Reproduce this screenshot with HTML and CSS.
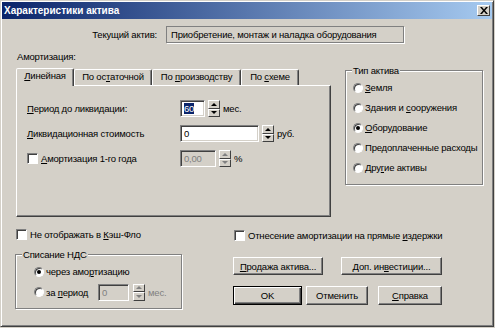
FILE: index.html
```html
<!DOCTYPE html>
<html lang="ru">
<head>
    <meta charset="UTF-8">
    <meta name="viewport" content="width=device-width, initial-scale=1.0">
    <title>Характеристики актива</title>
    <link rel="stylesheet" href="styles.css">
</head>
<body>

<div class="window">
    <div class="titlebar">
        <span class="title">Характеристики актива</span>
        <span class="close-btn">
            <svg width="8" height="7" viewBox="0 0 8 7"><path d="M0 0h2l2 2.5L6 0h2L5 3.5 8 7H6L4 4.5 2 7H0l3-3.5z" fill="#000"/></svg>
        </span>
    </div>

    <div class="content">
        <div class="current-row">
            <span class="current-label">Текущий актив:</span>
            <div class="readonly-field">Приобретение, монтаж и наладка оборудования</div>
        </div>

        <div class="main">
            <div class="amort">
                <div class="caption">Амортизация:</div>
                <div class="tabs">
                    <div class="tab tab-line active"><u>Л</u>инейная</div>
                    <div class="tab tab-rest">По ос<u>т</u>аточной</div>
                    <div class="tab tab-prod">По <u>п</u>роизводству</div>
                    <div class="tab tab-scheme">По <u>с</u>хеме</div>
                </div>
                <div class="panel">
                    <div class="form-row">
                        <span class="row-label"><u>П</u>ериод до ликвидации:</span>
                        <div class="input w-period"><span class="selected">60</span></div>
                        <div class="spin"><span class="spin-up"></span><span class="spin-down"></span></div>
                        <span class="unit">мес.</span>
                    </div>
                    <div class="form-row">
                        <span class="row-label"><u>Л</u>иквидационная стоимость</span>
                        <div class="input w-residual">0</div>
                        <div class="spin"><span class="spin-up"></span><span class="spin-down"></span></div>
                        <span class="unit">руб.</span>
                    </div>
                    <div class="form-row">
                        <span class="row-label check-label"><span class="checkbox"></span><span><u>А</u>мортизация 1-го года</span></span>
                        <div class="input w-first disabled">0,00</div>
                        <div class="spin disabled"><span class="spin-up"></span><span class="spin-down"></span></div>
                        <span class="unit">%</span>
                    </div>
                </div>
            </div>

            <fieldset class="group type-group">
                <legend>Тип актива</legend>
                <div class="radio-row"><span class="radio"></span><span><u>З</u>емля</span></div>
                <div class="radio-row"><span class="radio"></span><span>Здания и <u>с</u>ооружения</span></div>
                <div class="radio-row"><span class="radio checked"></span><span><u>О</u>борудование</span></div>
                <div class="radio-row"><span class="radio"></span><span>Пре<u>д</u>оплаченные расходы</span></div>
                <div class="radio-row"><span class="radio"></span><span>Дру<u>г</u>ие активы</span></div>
            </fieldset>
        </div>

        <div class="bottom">
            <div class="bottom-left">
                <div class="check-row"><span class="checkbox"></span><span>Не отображать в <u>К</u>эш-Фло</span></div>
                <fieldset class="group nds-group">
                    <legend>Списание НДС</legend>
                    <div class="radio-row"><span class="radio checked"></span><span>через амо<u>р</u>тизацию</span></div>
                    <div class="radio-row period-row">
                        <span class="radio"></span><span class="period-label">за <u>п</u>ериод</span>
                        <div class="input w-nds disabled">0</div>
                        <div class="spin disabled"><span class="spin-up"></span><span class="spin-down"></span></div>
                        <span class="unit muted">мес.</span>
                    </div>
                </fieldset>
            </div>

            <div class="bottom-right">
                <div class="check-row"><span class="checkbox"></span><span>Отнесение амортизации на прямые <u>и</u>здержки</span></div>
                <div class="button-row first">
                    <button class="btn w-sale"><u>П</u>родажа актива...</button>
                    <button class="btn w-invest">Доп. ин<u>в</u>естиции...</button>
                </div>
                <div class="button-row second">
                    <button class="btn default w-ok">OK</button>
                    <button class="btn w-cancel">Отменить</button>
                    <button class="btn w-help"><u>С</u>правка</button>
                </div>
            </div>
        </div>
    </div>
</div>

</body>
</html>
```

FILE: styles.css
```css
body {
    margin: 0;
    padding: 0;
    background-color: #d4d0c8;
    font-family: 'Liberation Sans', Arial, sans-serif;
    font-size: 9.5px;
    letter-spacing: -0.2px;
    color: #000;
}

u {
    text-decoration: underline;
    text-underline-offset: 1px;
}

.window {
    width: 494px;
    height: 327px;
    box-sizing: border-box;
    background: #d4d0c8;
    border: 1px solid;
    border-color: #d4d0c8 #404040 #404040 #d4d0c8;
    box-shadow: inset 1px 1px 0 #fff, inset -1px -1px 0 #808080;
    padding: 1px;
}

.titlebar {
    height: 17px;
    display: flex;
    align-items: center;
    justify-content: space-between;
    padding: 0 2px 0 2px;
    background: linear-gradient(to right, #0a246a, #a6caf0);
    color: #fff;
    font-weight: bold;
    font-size: 10px;
    letter-spacing: 0;
}

.close-btn {
    width: 13px;
    height: 11px;
    box-sizing: border-box;
    background: #d4d0c8;
    border: 1px solid;
    border-color: #fff #404040 #404040 #fff;
    display: flex;
    align-items: center;
    justify-content: center;
}

.content {
    padding: 7px 0 0 13px;
}

.current-row {
    display: flex;
    align-items: center;
    height: 17px;
}

.current-label {
    width: 142px;
    margin-right: 9px;
    text-align: right;
}

.readonly-field {
    width: 238px;
    height: 17px;
    box-sizing: border-box;
    border: 1px solid #808080;
    box-shadow: 1px 1px 0 #fff;
    padding-left: 4px;
    line-height: 15px;
}

.main {
    display: flex;
    margin-top: 7px;
}

.amort {
    width: 315px;
    margin-left: 1px;
}

.caption {
    height: 13px;
    line-height: 13px;
    padding-left: 1px;
}

.tabs {
    display: flex;
    align-items: flex-end;
    height: 18px;
    margin-top: 4px;
}

.tab {
    height: 16px;
    box-sizing: border-box;
    border: 1px solid;
    border-bottom: none;
    border-color: #fff #404040 transparent #fff;
    box-shadow: inset -1px 0 0 #808080;
    border-radius: 2px 2px 0 0;
    line-height: 14px;
    text-align: center;
    background: #d4d0c8;
}

.tab.active {
    height: 18px;
    margin-bottom: -1px;
    position: relative;
    z-index: 1;
}

.tab-line { width: 58px; }
.tab-rest { width: 78px; }
.tab-prod { width: 89px; }
.tab-scheme { width: 58px; }

.panel {
    height: 132px;
    box-sizing: border-box;
    border: 1px solid;
    border-color: #fff #404040 #404040 #fff;
    box-shadow: inset -1px -1px 0 #808080;
    padding: 14px 0 0 10px;
}

.form-row {
    display: flex;
    align-items: center;
    height: 17px;
    margin-bottom: 8px;
}

.row-label {
    width: 153px;
}

.check-label {
    display: flex;
    align-items: center;
}

.input {
    height: 17px;
    box-sizing: border-box;
    background: #fff;
    border: 1px solid;
    border-color: #808080 #fff #fff #808080;
    box-shadow: inset 1px 1px 0 #404040, inset -1px -1px 0 #d4d0c8;
    padding-left: 3px;
    line-height: 15px;
}

.input.disabled {
    background: #d4d0c8;
    color: #808080;
}

.selected {
    background: #0a246a;
    color: #fff;
}

.w-period { width: 25px; }
.w-residual { width: 79px; }
.w-first { width: 36px; }
.w-nds { width: 31px; }

.spin {
    display: flex;
    flex-direction: column;
    width: 12px;
    height: 17px;
    margin-left: 3px;
}

.spin span {
    flex: 1;
    display: flex;
    align-items: center;
    justify-content: center;
    box-sizing: border-box;
    background: #d4d0c8;
    border: 1px solid;
    border-color: #fff #404040 #404040 #fff;
}

.spin span::after {
    content: "";
    width: 0;
    height: 0;
    border-left: 3px solid transparent;
    border-right: 3px solid transparent;
}

.spin-up::after {
    border-bottom: 3px solid #000;
}

.spin-down::after {
    border-top: 3px solid #000;
}

.spin.disabled .spin-up::after {
    border-bottom-color: #808080;
}

.spin.disabled .spin-down::after {
    border-top-color: #808080;
}

.unit {
    margin-left: 3px;
}

.unit.muted {
    color: #808080;
}

.checkbox {
    width: 11px;
    height: 11px;
    box-sizing: border-box;
    background: #fff;
    border: 1px solid;
    border-color: #808080 #fff #fff #808080;
    box-shadow: inset 1px 1px 0 #404040;
    margin-right: 3px;
    flex-shrink: 0;
}

.radio {
    width: 10px;
    height: 10px;
    box-sizing: border-box;
    border-radius: 50%;
    background: #fff;
    border: 1px solid;
    border-color: #808080 #fff #fff #808080;
    box-shadow: inset 1px 1px 0 #404040;
    margin-right: 2px;
    display: flex;
    align-items: center;
    justify-content: center;
    flex-shrink: 0;
}

.radio.checked::after {
    content: "";
    width: 4px;
    height: 4px;
    border-radius: 50%;
    background: #000;
}

.group {
    margin: 0;
    box-sizing: border-box;
    border: 1px solid #808080;
    box-shadow: inset 1px 1px 0 #fff, 1px 1px 0 #fff;
    padding: 4px 0 0 7px;
}

.group legend {
    padding: 0 1px;
    margin-left: -1px;
    line-height: 13px;
    background: #d4d0c8;
}

.type-group {
    width: 138px;
    height: 121px;
    margin: 14px 0 0 14px;
}

.radio-row {
    display: flex;
    align-items: center;
    height: 13px;
    margin-bottom: 7px;
    white-space: nowrap;
}

.bottom {
    display: flex;
    margin-top: 11px;
}

.bottom-left {
    width: 167px;
}

.check-row {
    display: flex;
    align-items: center;
    height: 13px;
    padding-left: 1px;
}

.nds-group {
    width: 167px;
    height: 61px;
    margin-top: 7px;
    padding-top: 4px;
}

.nds-group .radio-row {
    margin-left: 11px;
    margin-bottom: 6px;
}

.nds-group .period-row {
    height: 16px;
}

.period-label {
    width: 52px;
}

.period-row .spin {
    margin-left: 4px;
}

.bottom-right {
    margin-left: 51px;
    padding-top: 1px;
}

.button-row {
    display: flex;
}

.button-row.first {
    margin-top: 15px;
    gap: 18px;
}

.button-row.second {
    margin-top: 11px;
}

.btn {
    height: 18px;
    box-sizing: border-box;
    padding: 0;
    font-family: inherit;
    font-size: 9.5px;
    letter-spacing: -0.2px;
    color: #000;
    background: #d4d0c8;
    border: 1px solid;
    border-color: #fff #404040 #404040 #fff;
    box-shadow: inset -1px -1px 0 #808080;
    border-radius: 0;
}

.btn.default {
    border-color: #000;
    box-shadow: inset 1px 1px 0 #fff, inset -1px -1px 0 #404040, inset -2px -2px 0 #808080;
}

.button-row.second .btn {
    height: 19px;
}

.w-sale { width: 90px; }
.w-invest { width: 101px; }
.w-ok { width: 69px; }
.w-cancel { width: 62px; margin-left: 4px; }
.w-help { width: 64px; margin-left: 10px; }
```
